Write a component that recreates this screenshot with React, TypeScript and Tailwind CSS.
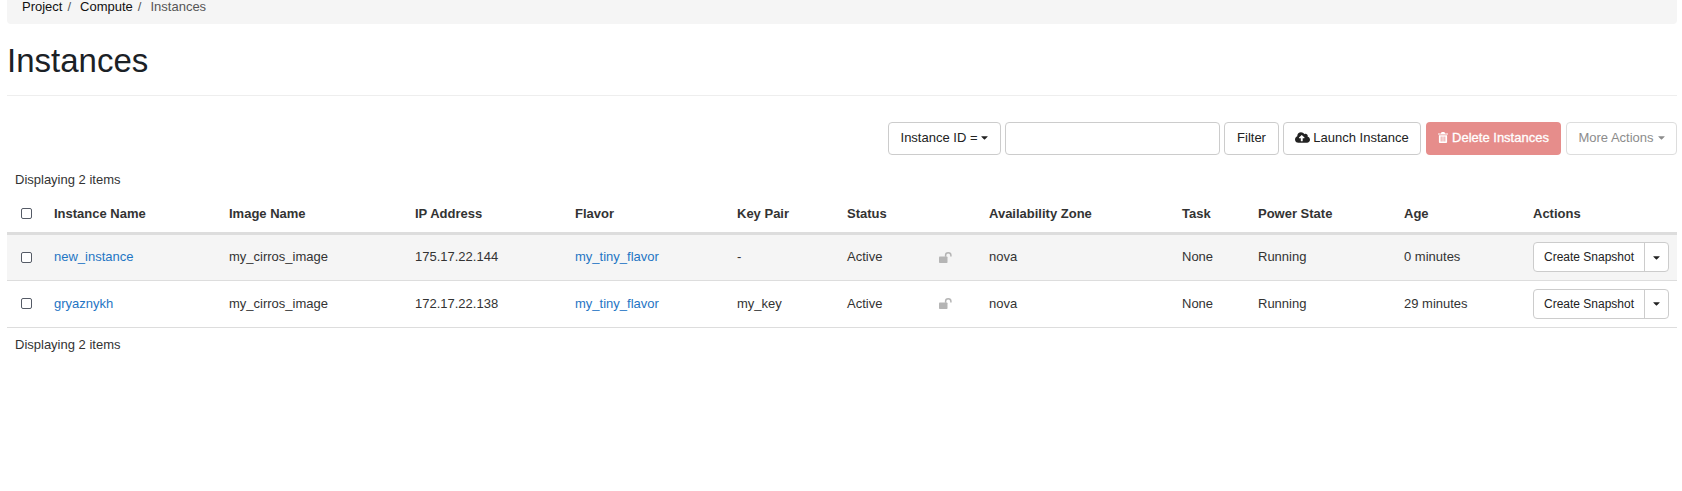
import React from 'react';
import { FaCaretDown, FaCloudUploadAlt } from 'react-icons/fa';

const ROWS = [
  { name: 'new_instance', ip: '175.17.22.144', key: '-', age: '0 minutes', shaded: true },
  { name: 'gryaznykh', ip: '172.17.22.138', key: 'my_key', age: '29 minutes', shaded: false },
];

const Checkbox = () => (
  <span className="block w-[11px] h-[11px] ml-[6px] rounded-[2px] border border-[#555b66] bg-white" />
);

const UnlockIcon = () => (
  <svg viewBox="0 0 13 11" className="w-[13px] h-[11px] text-[#b5b5b5]" fill="none">
    <rect x="0" y="4.5" width="8.5" height="6.5" rx="0.8" fill="currentColor" />
    <path d="M6.6 4.8V3.2C6.6 1.8 7.7 0.8 9.2 0.8C10.7 0.8 11.9 1.8 11.9 3.2V4.6" stroke="currentColor" strokeWidth="1.5" />
  </svg>
);

const TrashIcon = () => (
  <svg viewBox="0 0 11 12" className="w-[10px] h-[11px]" fill="currentColor">
    <path d="M4 0H7L7.8 1.5H11V2.8H0V1.5H3.2Z" />
    <path fillRule="evenodd" d="M1 3.6H10V11C10 11.6 9.6 12 9 12H2C1.4 12 1 11.6 1 11ZM3 5V10.5H3.9V5ZM5.05 5V10.5H5.95V5ZM7.1 5V10.5H8V5Z" />
  </svg>
);

const App: React.FC = () => {
  return (
    <div className="h-[491px] bg-white overflow-hidden text-[13px] leading-[18px] text-[#333333] font-['Liberation_Sans',Arial,sans-serif]">
      <div className="flex gap-[5px] h-[24px] ml-[7px] mr-[5px] pl-[15px] items-end pb-[8px] bg-[#f5f5f5] rounded-b-[4px] text-[#111]">
        <span>Project</span>
        <span className="text-[#555] mr-[4px]">/</span>
        <span>Compute</span>
        <span className="text-[#555] mr-[4px]">/</span>
        <span className="text-[#555]">Instances</span>
      </div>

      <div className="ml-[7px] mr-[5px] h-[72px] border-b border-[#eeeeee] pt-[17px]">
        <h1 className="text-[33px] leading-[40px] text-[#1b2126]">Instances</h1>
      </div>

      <div className="flex justify-end gap-[4px] mt-[26px] mr-[5px] h-[33px]">
        <button className="flex items-center gap-[4px] w-[113px] justify-center rounded border border-[#cccccc] bg-white text-[#222] pb-[2px]">
          Instance ID = <FaCaretDown className="w-[7px] h-[11px]" />
        </button>
        <input className="w-[215px] rounded border border-[#cccccc] bg-white" />
        <button className="w-[55px] rounded border border-[#cccccc] bg-white text-[#222] pb-[2px]">Filter</button>
        <button className="flex items-center justify-center gap-[3px] w-[138px] rounded border border-[#cccccc] bg-white text-[#222] pb-[2px]">
          <FaCloudUploadAlt className="w-[15px] h-[15px]" /> Launch Instance
        </button>
        <button className="flex items-center justify-center gap-[4px] w-[135px] ml-[1px] rounded bg-[#e68d8b] text-white font-medium pb-[2px] [-webkit-text-stroke:0.3px_white]">
          <TrashIcon /> Delete Instances
        </button>
        <button className="flex items-center justify-center gap-[4px] w-[111px] ml-[1px] rounded border border-[#dddddd] bg-white text-[#8c8c8c] pb-[2px]">
          More Actions <FaCaretDown className="w-[7px] h-[11px]" />
        </button>
      </div>

      <div className="ml-[15px] mt-[16px] h-[18px]">Displaying 2 items</div>

      <table className="ml-[7px] mt-[7px] w-[1670px] table-fixed border-collapse">
        <colgroup>
          <col className="w-[39px]" />
          <col className="w-[175px]" />
          <col className="w-[186px]" />
          <col className="w-[160px]" />
          <col className="w-[162px]" />
          <col className="w-[110px]" />
          <col className="w-[142px]" />
          <col className="w-[193px]" />
          <col className="w-[76px]" />
          <col className="w-[146px]" />
          <col className="w-[129px]" />
          <col />
        </colgroup>
        <thead>
          <tr className="h-[37px] border-b-[3px] border-[#dddddd] text-left">
            <th className="pl-[8px] font-normal"><Checkbox /></th>
            <th className="px-[8px]">Instance Name</th>
            <th className="px-[8px]">Image Name</th>
            <th className="px-[8px]">IP Address</th>
            <th className="px-[8px]">Flavor</th>
            <th className="px-[8px]">Key Pair</th>
            <th className="px-[8px]">Status</th>
            <th className="px-[8px]">Availability Zone</th>
            <th className="px-[8px]">Task</th>
            <th className="px-[8px]">Power State</th>
            <th className="px-[8px]">Age</th>
            <th className="px-[8px]">Actions</th>
          </tr>
        </thead>
        <tbody>
          {ROWS.map((row) => (
            <tr key={row.name} className={`h-[47px] border-b border-[#dddddd] ${row.shaded ? 'bg-[#f5f5f5]' : ''}`}>
              <td className="pl-[8px]"><Checkbox /></td>
              <td className="px-[8px] text-[#1f75c4]">{row.name}</td>
              <td className="px-[8px]">my_cirros_image</td>
              <td className="px-[8px]">{row.ip}</td>
              <td className="px-[8px] text-[#1f75c4]">my_tiny_flavor</td>
              <td className="px-[8px]">{row.key}</td>
              <td className="px-[8px]">
                <div className="flex items-center justify-between pr-[21px]">
                  Active
                  <UnlockIcon />
                </div>
              </td>
              <td className="px-[8px]">nova</td>
              <td className="px-[8px]">None</td>
              <td className="px-[8px]">Running</td>
              <td className="px-[8px]">{row.age}</td>
              <td className="pl-[8px]">
                <div className="flex h-[30px] w-[136px] rounded border border-[#cccccc] bg-white text-[12px] text-[#222]">
                  <span className="flex flex-1 items-center justify-center border-r border-[#cccccc]">Create Snapshot</span>
                  <span className="flex w-[23px] items-center justify-center"><FaCaretDown className="w-[7px] h-[11px]" /></span>
                </div>
              </td>
            </tr>
          ))}
        </tbody>
      </table>

      <div className="ml-[15px] mt-[8px]">Displaying 2 items</div>
    </div>
  );
};

export default App;
